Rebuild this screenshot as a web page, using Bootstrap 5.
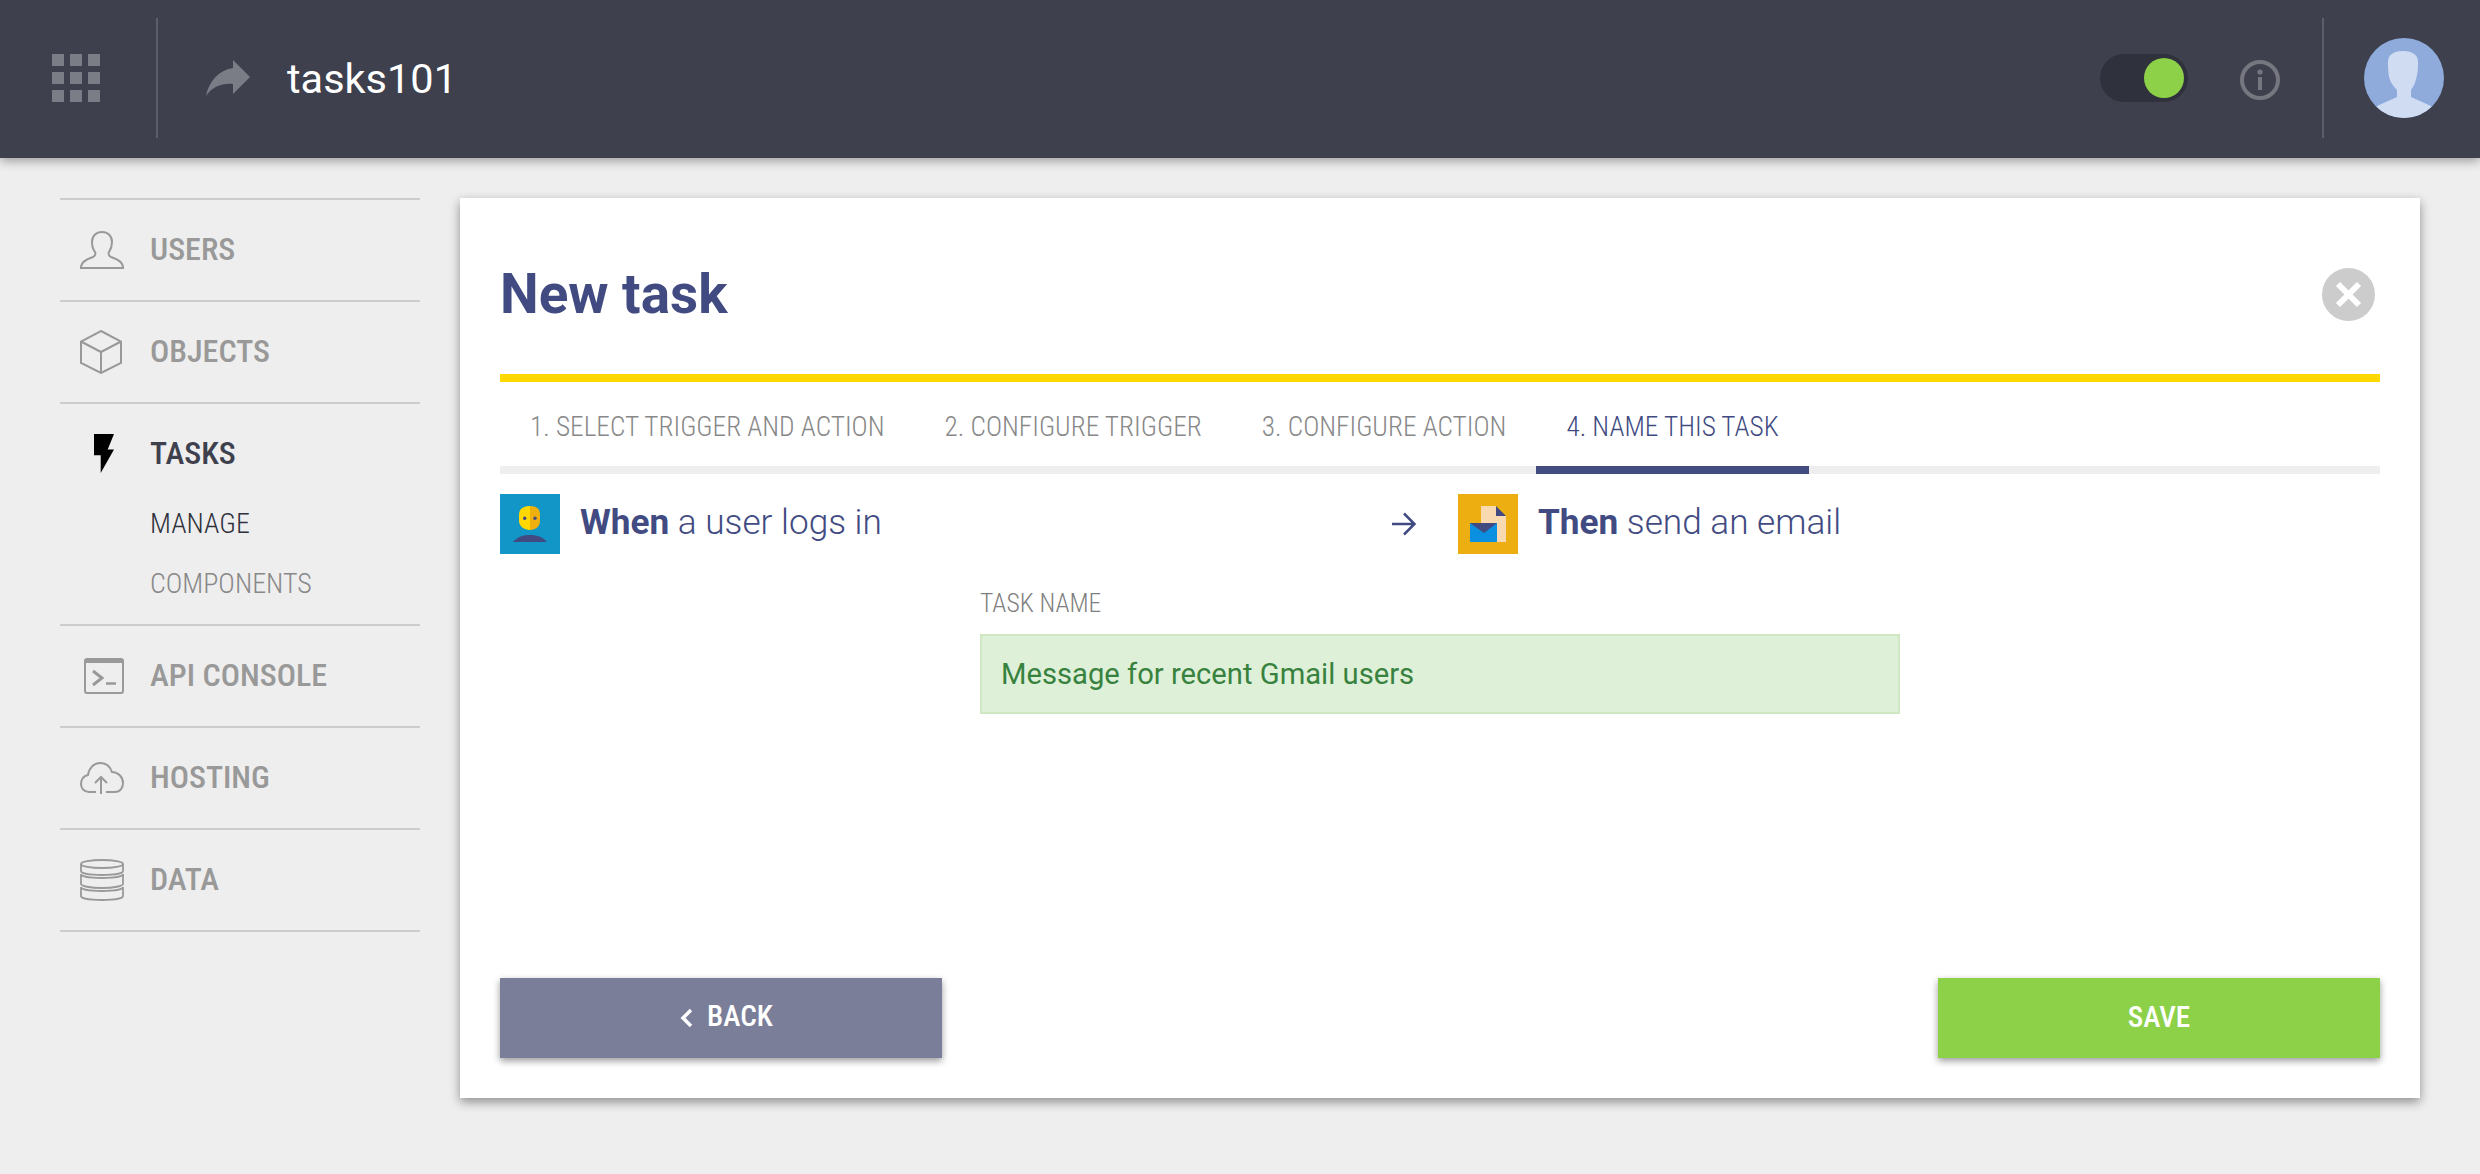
<!DOCTYPE html>
<html lang="en">

<head>
    <meta charset="UTF-8">
    <meta name="viewport" content="width=device-width, initial-scale=1.0">
    <title>tasks101</title>
    <link href="https://cdn.jsdelivr.net/npm/bootstrap@5.3.0/dist/css/bootstrap.min.css" rel="stylesheet">
    <style>
        body {
            font-family: Roboto, "Liberation Sans", sans-serif;
            background-color: #eeeeee;
        }

        .cond {
            font-family: "Roboto Condensed", Roboto, sans-serif;
        }

        /* top bar */
        .top-bar {
            height: 158px;
            padding-bottom: 2px;
            background-color: #3e404d;
            box-shadow: 0 3px 10px rgba(0, 0, 0, .35);
        }

        .bar-divider {
            width: 2px;
            height: 120px;
            background-color: #5c5e6a;
        }

        .bar-divider.end {
            margin-left: 42px;
        }

        .grid-btn {
            width: 156px;
            padding-left: 52px;
        }

        .grid-dots {
            display: grid;
            grid-template-columns: repeat(3, 12px);
            grid-auto-rows: 12px;
            gap: 6px;
        }

        .grid-dots span {
            background-color: #7a7c86;
        }

        .app-name {
            color: #fff;
            font-size: 41.5px;
            margin: 2px 0 0 37px;
        }

        .toggle-track {
            width: 88px;
            height: 48px;
            padding: 4px;
            border-radius: 24px;
            background-color: #2f313c;
        }

        .toggle-knob {
            width: 40px;
            height: 40px;
            border-radius: 50%;
            background-color: #8cd147;
        }

        .info-mark {
            margin: 4px 0 0 52px;
        }

        .avatar-mark {
            margin: 0 36px 0 40px;
        }

        .page-body {
            padding-bottom: 76px;
        }

        /* sidebar */
        .side-nav {
            width: 360px;
            margin: 40px 40px 0 60px;
            border-top: 2px solid #ccc;
        }

        .side-group {
            border-bottom: 2px solid #ccc;
        }

        .side-row {
            height: 100px;
            color: #999;
            font-size: 32px;
            font-weight: 500;
        }

        .side-label {
            margin-bottom: 3px;
        }

        .side-icon {
            width: 90px;
            padding-left: 20px;
        }

        .bolt-mark {
            margin-left: 14px;
        }

        .side-group.current .side-row {
            color: #3e404d;
        }

        .sub-list {
            margin-top: -10px;
            padding-bottom: 10px;
        }

        .sub-link {
            padding-left: 90px;
            height: 60px;
            font-size: 28px;
            font-weight: 300;
            color: #888;
        }

        .sub-link.current {
            color: #2f313c;
        }

        /* task card */
        .task-card {
            width: 1960px;
            height: 900px;
            margin-top: 40px;
            padding: 0 40px 40px;
            border: 0;
            border-radius: 0;
            box-shadow: 0 4px 10px rgba(0, 0, 0, .4);
        }

        .task-head {
            height: 176px;
            padding-top: 16px;
        }

        .task-title {
            font-size: 54.8px;
            font-weight: 700;
            color: #414b82;
        }

        .close-mark {
            width: 53px;
            height: 53px;
            margin-right: 5px;
            border-radius: 50%;
            background-color: #ccc;
        }

        .step-tabs {
            border-top: 8px solid #ffd800;
            border-bottom: 8px solid #eee;
        }

        .step-tabs .nav-link {
            height: 92px;
            margin-bottom: -8px;
            padding: 6px 30px 0;
            display: flex;
            align-items: center;
            font-size: 27.3px;
            font-weight: 300;
            color: #888;
            border-bottom: 8px solid transparent;
        }

        .step-tabs .nav-link.active {
            color: #414b82;
            border-bottom-color: #434c80;
        }

        .flow-row {
            margin-top: 20px;
            height: 60px;
            font-size: 35.2px;
            font-weight: 300;
            color: #414b82;
        }

        .flow-row strong {
            font-weight: 700;
        }

        .flow-side {
            width: 892px;
        }

        .flow-arrow {
            width: 66px;
        }

        .flow-text {
            margin: 0 0 3px 20px;
        }

        .name-form {
            width: 920px;
            margin: 33px auto 0;
        }

        .name-form .form-label {
            margin-bottom: 15px;
            line-height: 32px;
            font-size: 25.6px;
            font-weight: 300;
            color: #808080;
        }

        .name-form .form-control {
            height: 80px;
            padding: 0 19px;
            font-size: 29.2px;
            font-weight: 400;
            color: #38823f;
            background-color: #dff0d8;
            border: 2px solid #cfe8c3;
            border-radius: 0;
        }

        .task-foot .btn {
            width: 442px;
            height: 80px;
            border: 0;
            border-radius: 0;
            color: #fff;
            font-size: 29.2px;
            font-weight: 500;
            box-shadow: 0 3px 7px rgba(0, 0, 0, .4);
        }

        .task-foot .btn-back {
            padding-left: 22px;
            gap: 14px;
        }

        .back-label {
            margin-bottom: 3px;
        }

        .btn-back {
            background-color: #7a7e99;
        }

        .btn-save {
            background-color: #8cd147;
        }
    </style>
</head>

<body>
    <!-- top bar -->
    <div class="top-bar d-flex align-items-center">
        <div class="grid-btn">
            <div class="grid-dots">
                <span></span><span></span><span></span>
                <span></span><span></span><span></span>
                <span></span><span></span><span></span>
            </div>
        </div>
        <div class="bar-divider"></div>
        <svg class="ms-5" width="44" height="36" viewBox="0 0 44 36">
            <path fill="#7a7c86" d="M27 0 44 17 27 34V24C16 23 6 27 0 36 3 20 14 10 27 8Z" />
        </svg>
        <span class="app-name">tasks101</span>

        <div class="toggle-track ms-auto d-flex justify-content-end">
            <div class="toggle-knob"></div>
        </div>
        <svg class="info-mark" width="40" height="40" viewBox="0 0 40 40">
            <circle cx="20" cy="20" r="18" fill="none" stroke="#75767f" stroke-width="4" />
            <circle cx="20" cy="12" r="2.6" fill="#75767f" />
            <rect x="18" y="17" width="4" height="13" fill="#75767f" />
        </svg>
        <div class="bar-divider end"></div>
        <svg class="avatar-mark" width="80" height="80" viewBox="0 0 80 80">
            <clipPath id="avatar-clip">
                <circle cx="40" cy="40" r="40" />
            </clipPath>
            <circle cx="40" cy="40" r="40" fill="#8fabdc" />
            <path clip-path="url(#avatar-clip)" fill="#cfdcf2"
                d="M13 68 33 59V52C28 47 25 42 24.500 35 24 30 24 28 24 24 24 17 29 13 39 13 49 13 54 17 54 24 54 30 54 33 53 37 52 43 50 48 47 52V59L67 68V80H13Z" />
        </svg>
    </div>

    <div class="page-body d-flex align-items-start">
        <!-- sidebar -->
        <nav class="side-nav cond">
            <div class="side-group">
                <div class="side-row d-flex align-items-center">
                    <div class="side-icon">
                        <svg class="d-block" width="44" height="38" viewBox="0 0 44 38" fill="none" stroke="#999" stroke-width="2">
                            <path d="M1 37C1 30 8 28 13 26 15 25 16 23 15 21 12 17 12 13 12 11 12 5 16 1 22 1 28 1 32 5 32 11 32 14 31 18 29 21 28 23 29 25 31 26 36 28 43 30 43 37Z" />
                        </svg>
                    </div>
                    <span class="side-label">USERS</span>
                </div>
            </div>
            <div class="side-group">
                <div class="side-row d-flex align-items-center">
                    <div class="side-icon">
                        <svg class="d-block" width="42" height="44" viewBox="0 0 42 44" fill="none" stroke="#999" stroke-width="2">
                            <path d="M21 1 41 11.500V33L21 43 1 33V11.500ZM1 11.500 21 22 41 11.500M21 22V43" />
                        </svg>
                    </div>
                    <span class="side-label">OBJECTS</span>
                </div>
            </div>
            <div class="side-group current">
                <div class="side-row d-flex align-items-center">
                    <div class="side-icon">
                        <svg class="d-block bolt-mark" width="20" height="40" viewBox="0 0 20 40">
                            <path d="M0 0H20L13.700 15.600H20L6.700 39V21.300H0Z" />
                        </svg>
                    </div>
                    <span class="side-label">TASKS</span>
                </div>
                <div class="sub-list">
                    <div class="sub-link current d-flex align-items-center">MANAGE</div>
                    <div class="sub-link d-flex align-items-center">COMPONENTS</div>
                </div>
            </div>
            <div class="side-group">
                <div class="side-row d-flex align-items-center">
                    <div class="side-icon">
                        <svg class="d-block ms-1" width="40" height="36" viewBox="0 0 40 36" fill="none" stroke="#999">
                            <rect x="1" y="1" width="38" height="34" rx="2" stroke-width="2" />
                            <path d="M1 3H39" stroke-width="4" />
                            <path d="M9 13 18 20 9 27" stroke-width="3" />
                            <path d="M22 25.500H32" stroke-width="2.500" />
                        </svg>
                    </div>
                    <span class="side-label">API CONSOLE</span>
                </div>
            </div>
            <div class="side-group">
                <div class="side-row d-flex align-items-center">
                    <div class="side-icon">
                        <svg class="d-block" width="44" height="32" viewBox="0 0 44 32" fill="none" stroke="#999" stroke-width="2">
                            <path d="M16 30H9C4 30 1 26 1 22 1 17 4 14 8 13 9 6 14 1 20 1 26 1 30 4 32 10 38 10 43 15 43 21 43 26 40 30 35 30H26" />
                            <path d="M21 32V16M15 21 21 15 27 21" />
                        </svg>
                    </div>
                    <span class="side-label">HOSTING</span>
                </div>
            </div>
            <div class="side-group">
                <div class="side-row d-flex align-items-center">
                    <div class="side-icon">
                        <svg class="d-block" width="44" height="42" viewBox="0 0 44 42" fill="none" stroke="#999" stroke-width="1.800">
                            <ellipse cx="22" cy="5" rx="21" ry="4" />
                            <path d="M1 5V12C1 14.500 10 16 22 16 34 16 43 14.500 43 12V5" />
                            <path d="M1 15C1 17.500 10 19 22 19 34 19 43 17.500 43 15V25C43 27 34 29 22 29 10 29 1 27 1 25Z" />
                            <path d="M1 28C1 30.500 10 32 22 32 34 32 43 30.500 43 28V37C43 39.500 34 41 22 41 10 41 1 39.500 1 37Z" />
                        </svg>
                    </div>
                    <span class="side-label">DATA</span>
                </div>
            </div>
        </nav>

        <!-- new task card -->
        <div class="card task-card">
            <div class="task-head d-flex align-items-center justify-content-between">
                <span class="task-title">New task</span>
                <div class="close-mark d-flex align-items-center justify-content-center">
                    <svg width="27" height="27" viewBox="0 0 27 27">
                        <path d="M3 3 24 24M24 3 3 24" stroke="#fff" stroke-width="6" />
                    </svg>
                </div>
            </div>

            <ul class="nav step-tabs cond">
                <li class="nav-item"><a class="nav-link" href="#">1. SELECT TRIGGER AND ACTION</a></li>
                <li class="nav-item"><a class="nav-link" href="#">2. CONFIGURE TRIGGER</a></li>
                <li class="nav-item"><a class="nav-link" href="#">3. CONFIGURE ACTION</a></li>
                <li class="nav-item"><a class="nav-link active" href="#">4. NAME THIS TASK</a></li>
            </ul>

            <div class="flow-row d-flex align-items-center">
                <div class="flow-side d-flex align-items-center">
                    <svg width="60" height="60" viewBox="0 0 60 60">
                        <rect width="60" height="60" fill="#1295c7" />
                        <path fill="#ffd800" d="M30 12C23 12 19 15 19 21V27C19 32 24 36 30 36Z" />
                        <path fill="#efb00f" d="M30 12C37 12 40 15 40 21V27C40 32 36 36 30 36Z" />
                        <circle cx="24.700" cy="24.300" r="1.700" fill="#414b82" />
                        <circle cx="35" cy="24.300" r="1.700" fill="#414b82" />
                        <path fill="#414b82" d="M13 48C18 42 24 41 30 41 36 41 42 42 47 48Z" />
                    </svg>
                    <span class="flow-text"><strong>When</strong> a user logs in</span>
                </div>
                <div class="flow-arrow">
                    <svg class="d-block" width="24" height="24" viewBox="0 0 24 24" fill="none" stroke="#414b82" stroke-width="2.500">
                        <path d="M0 12H22M12 1.500 22.500 12 12 22.500" />
                    </svg>
                </div>
                <svg width="60" height="60" viewBox="0 0 60 60">
                    <rect width="60" height="60" fill="#ecae10" />
                    <path fill="#f8d9b0" d="M23 12H38V22H48V48H23Z" />
                    <path fill="#414b82" d="M38 12 48 22H38Z" />
                    <rect x="12" y="29" width="27" height="19" fill="#0b8fe0" />
                    <path fill="#414b82" d="M12 29H39L26 39Z" />
                </svg>
                <span class="flow-text"><strong>Then</strong> send an email</span>
            </div>

            <div class="name-form">
                <label class="form-label cond d-block" for="task-name">TASK NAME</label>
                <input class="form-control" id="task-name" type="text" value="Message for recent Gmail users">
            </div>

            <div class="task-foot d-flex justify-content-between mt-auto cond">
                <button class="btn btn-back d-flex align-items-center justify-content-center" type="button">
                    <svg width="14" height="20" viewBox="0 0 14 20" fill="none" stroke="#fff" stroke-width="3.500">
                        <path d="M12 2 4 10 12 18" />
                    </svg>
                    <span class="back-label">BACK</span>
                </button>
                <button class="btn btn-save" type="button">SAVE</button>
            </div>
        </div>
    </div>

    <script src="https://cdn.jsdelivr.net/npm/bootstrap@5.3.0/dist/js/bootstrap.bundle.min.js"></script>
</body>

</html>
